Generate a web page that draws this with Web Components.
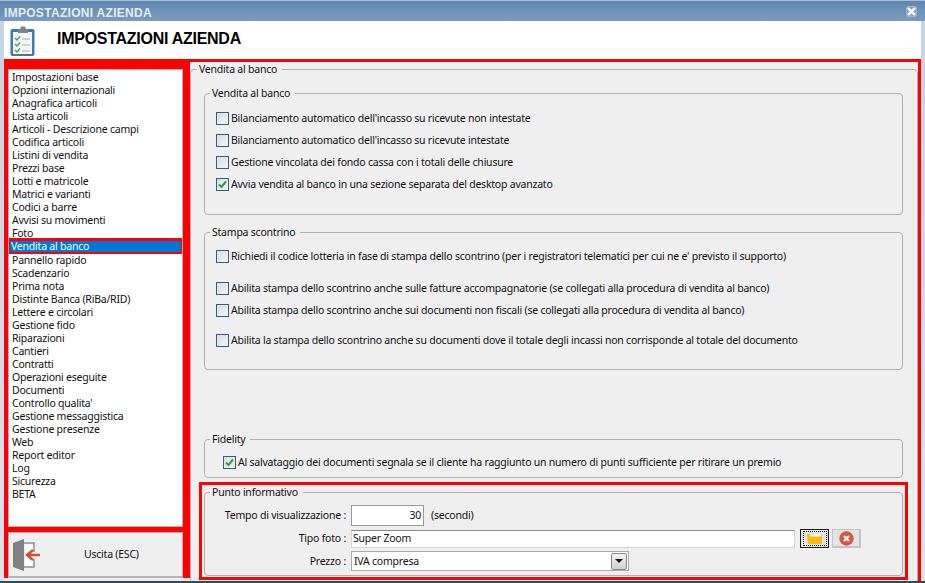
<!DOCTYPE html>
<html lang="it">
<head>
<meta charset="utf-8">
<title>Impostazioni azienda</title>
<style>
html, body { margin: 0; height: 100%; overflow: hidden; background: #eee; }
body { font: 10.5px/13px "Noto Sans", "Liberation Sans", sans-serif; letter-spacing: -0.22px; color: #111; }
</style>
</head>
<body>
<app-window heading="IMPOSTAZIONI AZIENDA">
    <side-menu slot="side" selected="Vendita al banco">Impostazioni base|Opzioni internazionali|Anagrafica articoli|Lista articoli|Articoli - Descrizione campi|Codifica articoli|Listini di vendita|Prezzi base|Lotti e matricole|Matrici e varianti|Codici a barre|Avvisi su movimenti|Foto|Vendita al banco|Pannello rapido|Scadenzario|Prima nota|Distinte Banca (RiBa/RID)|Lettere e circolari|Gestione fido|Riparazioni|Cantieri|Contratti|Operazioni eseguite|Documenti|Controllo qualita'|Gestione messaggistica|Gestione presenze|Web|Report editor|Log|Sicurezza|BETA</side-menu>

    <group-box label="Vendita al banco" inset="10">
        <group-box label="Vendita al banco" height="129" top="10">
            <check-row y="12">Bilanciamento automatico dell'incasso su ricevute non intestate</check-row>
            <check-row y="9">Bilanciamento automatico dell'incasso su ricevute intestate</check-row>
            <check-row y="9">Gestione vincolata dei fondo cassa con i totali delle chiusure</check-row>
            <check-row y="9" checked>Avvia vendita al banco in una sezione separata del desktop avanzato</check-row>
        </group-box>
        <group-box label="Stampa scontrino" height="145" top="10">
            <check-row y="11">Richiedi il codice lotteria in fase di stampa dello scontrino (per i registratori telematici per cui ne e' previsto il supporto)</check-row>
            <check-row y="19">Abilita stampa dello scontrino anche sulle fatture accompagnatorie (se collegati alla procedura di vendita al banco)</check-row>
            <check-row y="9">Abilita stampa dello scontrino anche sui documenti non fiscali (se collegati alla procedura di vendita al banco)</check-row>
            <check-row y="17">Abilita la stampa dello scontrino anche su documenti dove il totale degli incassi non corrisponde al totale del documento</check-row>
        </group-box>
        <group-box label="Fidelity" height="46" top="62" indent="19">
            <check-row y="10" checked>Al salvataggio dei documenti segnala se il cliente ha raggiunto un numero di punti sufficiente per ritirare un premio</check-row>
        </group-box>
        <info-panel></info-panel>
    </group-box>
</app-window>

<script>
const RED = '#f00';

class AppWindow extends HTMLElement {
    connectedCallback() {
        this.attachShadow({mode: 'open'}).innerHTML = `
        <style>
            :host { display: flex; flex-direction: column; width: 925px; height: 583px; box-sizing: border-box;
                border-bottom: 2px solid #33485c; background: linear-gradient(#c5d3e3, #dbe3ec); padding: 0 4px; overflow: hidden; }
            .title { flex: none; height: 21px; margin: 0 -4px; padding: 4px 8px 0 4px; box-sizing: border-box;
                display: flex; align-items: center; justify-content: space-between; border-top: 1px solid #a8bdd4;
                background: linear-gradient(#5f86ae, #7b9cc1); color: #e4edf6; letter-spacing: 0.3px;
                font: bold 12px/14px "Liberation Sans", sans-serif; }
            .close { display: flex; align-items: center; justify-content: center; width: 11px; height: 11px; box-sizing: border-box;
                margin: -4px 0 0; background: #88a6c6; border: 1px solid #9db6d0; border-radius: 2px; }
            .head { flex: none; height: 38px; background: #fff; display: flex; align-items: center; }
            .head svg { margin: 2px 0 0 6px; }
            .head b { margin: -2px 0 0 21px; font: bold 16px/20px "Liberation Sans", sans-serif; letter-spacing: -0.27px; color: #000; }
            .main { flex: none; height: 522px; display: flex; align-items: flex-start; background: #efefef; }
            .side { flex: none; width: 186px; height: 519px; }
            .content { flex: none; width: 731px; height: 522px; box-sizing: border-box; overflow: hidden;
                border-top: 3px solid ${RED}; border-right: 3px solid ${RED}; }
        </style>
        <div class="title"><span>${this.getAttribute('heading')}</span>
            <span class="close"><svg width="9" height="9" viewBox="0 0 9 9"><path d="M1 1l7 7M8 1L1 8" stroke="#fff" stroke-width="2.400"/></svg></span></div>
        <div class="head">
            <svg width="26" height="31" viewBox="0 0 26 31">
                <rect x="0.5" y="3" width="24" height="27" rx="2" fill="#3e78ae"/>
                <rect x="3" y="6" width="19" height="22" fill="#f4f6f7"/>
                <path d="M8 3h2l1-2.5h4l1 2.500h2v4H8z" fill="#7d8488"/>
                <path d="M5 12l2 2 3-3.500M5 18l2 2 3-3.500M5 24l2 2 3-3.500" fill="none" stroke="#46a55a" stroke-width="1.400"/>
                <path d="M12 13h8M12 19h8M12 25h8" stroke="#a9b0b5" stroke-width="1.200"/>
            </svg>
            <b>${this.getAttribute('heading')}</b>
        </div>
        <div class="main">
            <div class="side"><slot name="side"></slot></div>
            <div class="content"><slot></slot></div>
        </div>`;
    }
}

class SideMenu extends HTMLElement {
    connectedCallback() {
        const selected = this.getAttribute('selected');
        const rows = this.textContent.split('|').map(name => name === selected
            ? `<div class="sel"><span>${name}</span></div>`
            : `<div class="item">${name}</div>`).join('');
        this.attachShadow({mode: 'open'}).innerHTML = `
        <style>
            :host { display: flex; flex-direction: column; height: 519px; box-sizing: border-box;
                background: ${RED}; padding: 10px 7px 0 4px; }
            .list { flex: none; height: 458px; box-sizing: border-box; background: #fff;
                border: 1px solid #b4b4b4; padding-top: 1px; overflow: hidden; }
            .item { height: 13px; padding-left: 3px; line-height: 13px; white-space: nowrap; }
            .sel { margin: -2px -1px 0; height: 16px; padding: 3px 2px 2px; background: ${RED}; box-sizing: border-box; }
            .sel span { display: block; height: 11px; line-height: 11px; background: #0078d7; color: #fff; padding-left: 1px; }
            exit-button { margin-top: 5px; }
        </style>
        <div class="list">${rows}</div>
        <exit-button>Uscita (ESC)</exit-button>`;
    }
}

class ExitButton extends HTMLElement {
    connectedCallback() {
        this.attachShadow({mode: 'open'}).innerHTML = `
        <style>
            :host { display: flex; align-items: center; height: 46px; box-sizing: border-box;
                background: #efefef; border: 1px solid #b4b4b4; border-width: 1px 1px 2px; }
            svg { margin-left: 4px; }
            span { margin-left: 43px; }
        </style>
        <svg width="28" height="34" viewBox="0 0 28 34">
            <path d="M0 5l11-4v32l-11-4z" fill="#7f8183"/>
            <path d="M11 5h10v9M21 21v8H11" fill="none" stroke="#8f9193" stroke-width="1.500"/>
            <path d="M12 6h8v8h-5l-3 3 3 3h5v8h-8z" fill="#fff"/>
            <path d="M27 17H15M20 12l-6 5 6 5" fill="none" stroke="#cf5034" stroke-width="2.500"/>
        </svg>
        <span><slot></slot></span>`;
    }
}

class GroupBox extends HTMLElement {
    connectedCallback() {
        const height = this.getAttribute('height');
        const inset = this.getAttribute('inset') || 0;
        this.attachShadow({mode: 'open'}).innerHTML = `
        <style>
            :host { display: block; margin-top: ${this.getAttribute('top') || 0}px; ${height ? `height:${height}px;` : ''} }
            fieldset { margin: 0; padding: 0 ${inset ? '14px' : '0'} 0 ${inset ? '13px' : '11px'}; height: 100%; box-sizing: border-box; min-width: 0;
                border: 1px solid #b0b0b0; border-radius: 4px; ${inset ? 'height: 600px;' : ''} }
            legend { margin-left: ${inset ? -7 : -6}px; padding: 0 5px 0 2px; line-height: 14px; }
            .body { padding-left: ${this.getAttribute('indent') ? 7 : 0}px; }
        </style>
        <fieldset><legend>${this.getAttribute('label')}</legend><div class="body"><slot></slot></div></fieldset>`;
    }
}

class CheckRow extends HTMLElement {
    connectedCallback() {
        const checked = this.hasAttribute('checked');
        this.attachShadow({mode: 'open'}).innerHTML = `
        <style>
            :host { display: flex; align-items: center; height: 13px; gap: 2px; margin-top: ${this.getAttribute('y') || 0}px; white-space: nowrap; }
            i { flex: none; width: 13px; height: 13px; box-sizing: border-box; border: 1px solid #2d5f8f;
                background: linear-gradient(135deg, #dcdcdc, #f5f5f5); }
            svg { display: block; }
        </style>
        <i>${checked ? '<svg width="11" height="11" viewBox="0 0 11 11"><path d="M2 5.500l2.500 2.500L9 2.500" fill="none" stroke="#2f9e3a" stroke-width="2"/></svg>' : ''}</i>
        <span><slot></slot></span>`;
    }
}

class InfoPanel extends HTMLElement {
    connectedCallback() {
        this.attachShadow({mode: 'open'}).innerHTML = `
        <style>
            :host { display: block; margin: 4px -5px 0 -5px; height: 98px; box-sizing: border-box;
                border: 3px solid ${RED}; padding: 0 2px 0 2px; }
            .grid { display: grid; grid-template-columns: 135px 73px 1fr; align-items: center; row-gap: 3px; padding-top: 6px; }
            label { text-align: right; padding-right: 5px; white-space: nowrap; }
            .box { height: 21px; box-sizing: border-box; background: #fff; border: 1px solid #a0a0a0;
                border-top-color: #8a8a8a; padding: 0 2px; display: flex; align-items: center; }
            .num { justify-content: flex-end; border-color: #999; }
            .wide { display: flex; grid-column: 2 / 4; align-items: center; gap: 5px; height: 19px; }
            .wide .box { width: 444px; height: 18px; border-color: #d4d4d4; border-top-color: #8a8a8a; padding: 0 1px; }
            .sel { width: 278px; height: 20px; grid-column: 2 / 4; justify-content: space-between; padding: 0 1px 0 2px; border-color: #aaa; }
            .drop { width: 16px; height: 17px; box-sizing: border-box; border: 1px solid #888; border-radius: 2px;
                background: linear-gradient(#f3f3f3, #cfcfcf); display: flex; align-items: center; justify-content: center; }
            .drop::after { content: ''; border: 4px solid transparent; border-top: 4px solid #111; margin-top: 3px; }
            .btn { width: 29px; height: 19px; box-sizing: border-box; display: flex; align-items: center; justify-content: center;
                background: #e4e4e4; border: 1px solid #c4c4c4; border-width: 1px 2px 2px 1px; }
            .btn.on { border: 1px solid #1a1a1a; }
            .on span { display: flex; padding: 1px 3px; border: 1px dotted #111; }
            .btn.off { margin-left: -2px; }
            .sec { padding-left: 7px; }
            group-box { display: block; }
        </style>
        <group-box label="Punto informativo" height="91">
            <div class="grid">
                <label>Tempo di visualizzazione :</label>
                <div class="box num">30</div>
                <span class="sec">(secondi)</span>
                <label>Tipo foto :</label>
                <div class="wide">
                    <div class="box">Super Zoom</div>
                    <div class="btn on"><span><svg width="16" height="11" viewBox="0 0 16 11"><path d="M0 1h6l1 1h8v9H1z" fill="#fdbc0d"/><rect x="3" y="1.500" width="11" height="2" fill="#fff"/></svg></span></div>
                    <div class="btn off"><svg width="15" height="15" viewBox="0 0 15 15"><circle cx="7.500" cy="7.500" r="7.200" fill="#d35744"/><path d="M5 5l5 5M10 5l-5 5" stroke="#fff" stroke-width="2"/></svg></div>
                </div>
                <label>Prezzo :</label>
                <div class="box sel">IVA compresa<span class="drop"></span></div>
            </div>
        </group-box>`;
    }
}

customElements.define('app-window', AppWindow);
customElements.define('side-menu', SideMenu);
customElements.define('exit-button', ExitButton);
customElements.define('group-box', GroupBox);
customElements.define('check-row', CheckRow);
customElements.define('info-panel', InfoPanel);
</script>
</body>
</html>
